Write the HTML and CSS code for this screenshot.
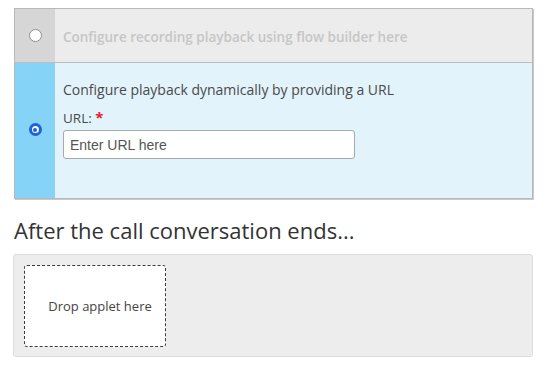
FILE: index.html
```html
<!DOCTYPE html>
<html lang="en">
<head>
    <meta charset="UTF-8">
    <title>Call playback</title>
    <link rel="stylesheet" href="styles.css">
</head>
<body>
    <div class="page">
        <div class="options">
            <div class="option option-disabled">
                <div class="option-radio"><span class="radio"></span></div>
                <div class="option-body">
                    <p class="option-title">Configure recording playback using flow builder here</p>
                </div>
            </div>
            <div class="option option-active">
                <div class="option-radio"><span class="radio radio-checked"></span></div>
                <div class="option-body">
                    <p class="option-title">Configure playback dynamically by providing a URL</p>
                    <label class="field-label" for="url">URL: <span class="required">*</span></label>
                    <input class="field-input" id="url" type="text" placeholder="Enter URL here">
                </div>
            </div>
        </div>

        <h2 class="section-title">After the call conversation ends...</h2>

        <div class="dropzone">
            <div class="drop-slot">Drop applet here</div>
        </div>
    </div>
</body>
</html>
```

FILE: styles.css
```css
body {
    font-family: 'Open Sans', 'DejaVu Sans', sans-serif;
    margin: 0;
    padding: 0;
    background-color: #ffffff;
    color: #333333;
}
.page {
    width: 519px;
    padding: 8px 0 0 14px;
}
.options {
    border: 1px solid #b8b8b8;
    box-shadow: 1px 1px 0 #c9c9c9;
}
.option {
    display: flex;
}
.option-radio {
    width: 40px;
    display: flex;
    align-items: center;
    justify-content: center;
}
.option-body {
    flex: 1;
    padding-left: 8px;
}
.option-title {
    margin: 0;
    font-size: 14px;
    line-height: 20px;
}
.option-disabled {
    height: 53px;
    border-bottom: 1px solid #bdbdbd;
    background-color: #ececec;
}
.option-disabled .option-radio {
    background-color: #d6d6d6;
}
.option-disabled .option-body {
    display: flex;
    align-items: center;
}
.option-disabled .option-title {
    color: #c6c6c6;
    font-weight: 600;
    font-size: 13.5px;
    padding-top: 2px;
}
.option-active {
    height: 135px;
    background-color: #e3f3fc;
}
.option-active .option-radio {
    background-color: #86d3f8;
    padding-bottom: 2px;
}
.option-active .option-body {
    padding-top: 17px;
}
.option-active .option-title {
    color: #4a4a4a;
}
.radio {
    box-sizing: border-box;
    width: 13px;
    height: 13px;
    border-radius: 50%;
    border: 1px solid #8f8f8f;
    background-color: #ffffff;
    display: block;
}
.radio-checked {
    border: 3px solid #1b63d6;
    background-color: #ffffff;
    position: relative;
}
.radio-checked::after {
    content: '';
    position: absolute;
    left: 1.5px;
    top: 1.5px;
    width: 4px;
    height: 4px;
    border-radius: 50%;
    background-color: #1b63d6;
}
.field-label {
    display: block;
    margin-top: 8px;
    font-size: 13.5px;
    line-height: 18px;
    color: #4a4a4a;
}
.required {
    color: #e8202a;
    font-weight: 700;
    font-size: 15px;
}
.field-input {
    display: block;
    box-sizing: border-box;
    margin-top: 3px;
    width: 292px;
    height: 29px;
    padding: 0 6px;
    border: 1px solid #a9a9a9;
    border-radius: 3px;
    background-color: #ffffff;
    font-family: 'Liberation Sans', Arial, sans-serif;
    font-size: 14px;
    outline: none;
}
.field-input::placeholder {
    color: #555555;
}
.section-title {
    margin: 16px 0 0 0;
    font-size: 22px;
    line-height: 30px;
    font-weight: 400;
    color: #333333;
}
.dropzone {
    margin-top: 9px;
    height: 103px;
    box-sizing: border-box;
    padding: 10px;
    background-color: #ededed;
    border: 1px solid #dcdcdc;
    border-radius: 3px;
    margin-left: -1px;
}
.drop-slot {
    box-sizing: border-box;
    width: 142px;
    height: 82px;
    display: flex;
    align-items: center;
    justify-content: center;
    padding-left: 10px;
    background-color: #ffffff;
    border: 1px dashed #3a3a3a;
    border-radius: 3px;
    font-size: 13px;
    color: #444444;
}
```
